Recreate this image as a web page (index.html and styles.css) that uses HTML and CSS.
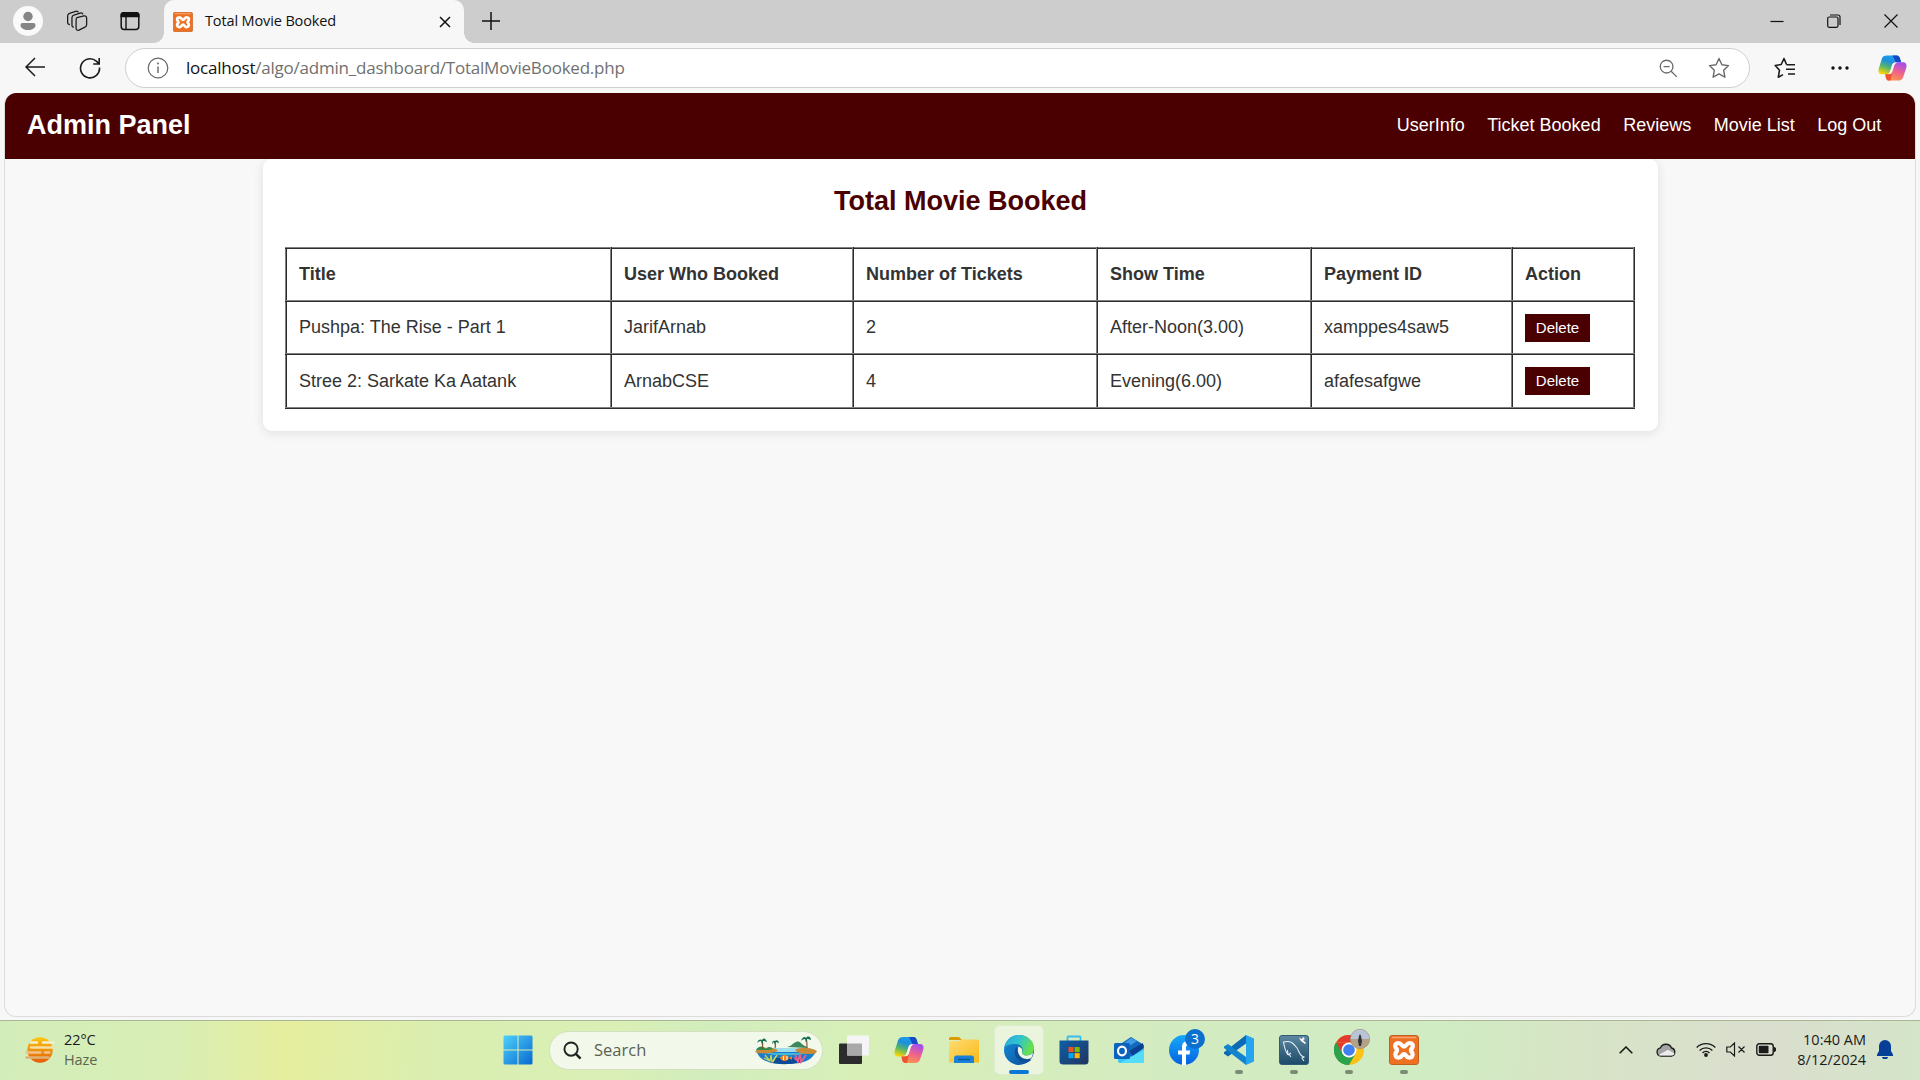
FILE: index.html
```html
<!DOCTYPE html>
<html lang="en">
<head>
<meta charset="utf-8">
<title>Total Movie Booked</title>
<link rel="stylesheet" href="styles.css">
</head>
<body>
<svg width="0" height="0" class="defs" aria-hidden="true">
  <defs>
    <linearGradient id="cpBlue" x1="0.7" y1="0" x2="0.3" y2="1"><stop offset="0" stop-color="#1ba0f2"/><stop offset=".35" stop-color="#1d8fdc"/><stop offset=".65" stop-color="#54b56b"/><stop offset="1" stop-color="#f6d60a"/></linearGradient>
    <linearGradient id="cpPink" x1="0.7" y1="0" x2="0.3" y2="1"><stop offset="0" stop-color="#a24df0"/><stop offset=".5" stop-color="#f0628b"/><stop offset="1" stop-color="#fd9a4c"/></linearGradient>
    <linearGradient id="win" x1="0" y1="0" x2="1" y2="1"><stop offset="0" stop-color="#4fd0fb"/><stop offset="1" stop-color="#0669cf"/></linearGradient>
    <linearGradient id="sun" x1="0" y1="0" x2="0" y2="1"><stop offset="0" stop-color="#fbc911"/><stop offset="1" stop-color="#e65a05"/></linearGradient>
    <linearGradient id="edgeTop" x1="0" y1="0" x2="1" y2=".4"><stop offset="0" stop-color="#2aa5dd"/><stop offset=".5" stop-color="#30c3d0"/><stop offset="1" stop-color="#66e04e"/></linearGradient>
    <linearGradient id="edgeLow" x1="0" y1="0" x2="1" y2="1"><stop offset="0" stop-color="#1590e0"/><stop offset="1" stop-color="#0c4a91"/></linearGradient>
    <linearGradient id="store" x1="0" y1="0" x2="1" y2="1"><stop offset="0" stop-color="#0f5fa8"/><stop offset="1" stop-color="#20345f"/></linearGradient>
    <linearGradient id="fb" x1="0" y1="0" x2="0" y2="1"><stop offset="0" stop-color="#17a9fb"/><stop offset="1" stop-color="#0562e0"/></linearGradient>
    <linearGradient id="folder" x1="0" y1="0" x2="1" y2="1"><stop offset="0" stop-color="#ffdc74"/><stop offset="1" stop-color="#f9b916"/></linearGradient>
    <linearGradient id="sql" x1="0" y1="0" x2="0" y2="1"><stop offset="0" stop-color="#5d87a1"/><stop offset="1" stop-color="#1c4a68"/></linearGradient>
    <symbol id="copilot" viewBox="0 0 30 30">
      <path d="M9 2h10c2 0 3 1.500 3.500 3.500L23.500 9h-5c-2.500 0-3.500 1.500-4 3.500l-2 6c-.6 1.900-1.500 3-3.500 3H4c-3 0-4.200-2.500-3.200-6L4 5.500C4.800 3 6.500 2 9 2z" fill="url(#cpBlue)"/>
      <path d="M15 2h4.500c2 0 3 1.500 3.500 3.500L24 9h-5.500z" fill="#1549c6"/>
      <path d="M21 28H11.500c-2 0-3-1.500-3.500-3.500L7 21.500h3.500c2.500 0 3.500-1.500 4-3.500l2-6c.6-1.900 1.500-3 3.500-3h6c3 0 4.200 2.500 3.200 6L26 24.500C25.200 27 23.500 28 21 28z" fill="url(#cpPink)"/>
      <path d="M8 21.500h3c2.400 0 3.400-1 4-3l-2 9.500h-1.500c-2 0-3-1.500-3.500-3.500z" fill="#ee5430"/>
      <path d="M17.500 9.500h3.500c-2.500 0-3.600 1-4.200 3l-1.700 5.500c-.6 2-1.600 3-3.800 3H9c2 0 3-1 3.500-2.700l1.900-6c.5-1.700 1.300-2.800 3.100-2.800z" fill="#f6f4ef"/>
    </symbol>
    <symbol id="xampp" viewBox="0 0 30 30">
      <rect x=".5" y=".5" width="29" height="29" rx="2.500" fill="#ee7023" stroke="#c4601f"/>
      <path d="M3 2.500h24" stroke="#f7a273" stroke-width="1.500"/>
      <path d="M9.500 8c-3 0-3.800 2.300-3 4.200.6 1.400 1.600 1.900 1.600 3s-1 1.600-1.600 3.200c-.8 2.300.6 4.300 3.200 4.300 3.200 0 3-3.600 5.300-3.600s2.100 3.600 5.300 3.600c2.600 0 4-2 3.200-4.300-.6-1.600-1.600-2.100-1.600-3.200s1-1.600 1.600-3c.8-1.900 0-4.200-3-4.200s-3.200 3.600-5.500 3.600-2.500-3.600-5.500-3.600z" fill="none" stroke="#fff" stroke-width="4.200" stroke-linejoin="round"/>
    </symbol>
  </defs>
</svg>

<div class="tabstrip">
  <div class="strip-tools">
    <svg class="avatar" viewBox="0 0 30 30"><circle cx="15" cy="15" r="15" fill="#fafafa"/><circle cx="15" cy="10.500" r="4.700" fill="#868686"/><path d="M7.500 19a2 2 0 0 1 2-2h11a2 2 0 0 1 2 2c0 3.500-3.500 5-7.500 5s-7.500-1.500-7.500-5z" fill="#868686"/></svg>
    <svg class="workspaces" viewBox="0 0 24 24" fill="none" stroke="#1b1b1b" stroke-width="1.400"><path d="M12 8.200l7.500-1.800c1.700-.4 3 .6 3 2.200v7.600c0 1.200-.6 2.100-1.800 2.500l-6.600 3.200c-1.700.7-3.100-.2-3.100-1.900v-9c0-1.500.2-2.500 1-2.800z"/><path d="M8.500 18.500c-1.400.2-2-.7-2-2V8.500c0-1.500.6-2.500 2-2.900l7-2.200c1.400-.4 2.600 0 3 1.400"/><path d="M4.200 15.800C3 16 1.800 15 1.800 13.500V6.500c0-1.500.6-2.500 2-2.900L10.500 1.500c1.400-.4 2.600 0 3 1.200"/></svg>
    <svg class="tabactions" viewBox="0 0 20 20"><rect x="1.200" y="1.700" width="17.600" height="16.800" rx="3" fill="none" stroke="#111" stroke-width="1.500"/><path d="M.5 6.300V4a3 3 0 0 1 3-3h13a3 3 0 0 1 3 3v2.300z" fill="#111"/><path d="M6 6v12" stroke="#111" stroke-width="1.400"/></svg>
  </div>
  <div class="tab">
    <svg class="favicon"><use href="#xampp"/></svg>
    <span class="tab-title">Total Movie Booked</span>
    <svg class="tab-close" viewBox="0 0 12 12"><path d="M1 1l10 10M11 1L1 11" stroke="#111" stroke-width="1.500"/></svg>
  </div>
  <svg class="newtab" viewBox="0 0 18 18"><path d="M9 0v18M0 9h18" stroke="#111" stroke-width="1.500"/></svg>
  <div class="winctl">
    <svg viewBox="0 0 14 14"><path d="M.5 7.500h13" stroke="#111" stroke-width="1.200"/></svg>
    <svg viewBox="0 0 14 14" fill="none" stroke="#111" stroke-width="1.200"><rect x=".7" y="3" width="10.300" height="10.300" rx="1.500"/><path d="M3 1h8a2 2 0 0 1 2 2v8"/></svg>
    <svg viewBox="0 0 14 14"><path d="M.5.500l13 13M13.500.500l-13 13" stroke="#111" stroke-width="1.200"/></svg>
  </div>
</div>

<div class="toolbar">
  <svg class="back" viewBox="0 0 20 20" fill="none" stroke="#1b1b1b" stroke-width="1.500"><path d="M20 10H1M10 1L1 10l9 9"/></svg>
  <svg class="reload" viewBox="0 0 22 22" fill="none" stroke="#1b1b1b" stroke-width="1.600"><path d="M20.500 10.500a9.500 9.500 0 1 1-3.200-6.300L20 6.700M20.200 1v6h-6"/></svg>
  <div class="address">
    <svg class="info" viewBox="0 0 22 22"><circle cx="11" cy="11" r="9.800" fill="none" stroke="#666" stroke-width="1.200"/><path d="M11 9.500v6.500" stroke="#666" stroke-width="1.400"/><circle cx="11" cy="6.500" r="1" fill="#666"/></svg>
    <span class="url"><b>localhost</b>/algo/admin_dashboard/TotalMovieBooked.php</span>
    <svg class="zoomout" viewBox="0 0 20 20" fill="none" stroke="#6a6a6a" stroke-width="1.400"><circle cx="8" cy="8" r="6.700"/><path d="M4.800 8h6.400M12.800 12.800l6 6"/></svg>
    <svg class="star" viewBox="0 0 22 22" fill="none" stroke="#6a6a6a" stroke-width="1.400" stroke-linejoin="round"><path d="M11 1.500l2.900 6.200 6.600.9-4.800 4.700 1.200 6.900L11 16.900l-5.900 3.300 1.200-6.900L1.500 8.600l6.600-.9z"/></svg>
  </div>
  <svg class="favs" viewBox="0 0 22 22" fill="none" stroke="#1b1b1b" stroke-width="1.600" stroke-linejoin="round"><path d="M12.500 7.500L10 1.500 7.200 7.500l-6 1 4.300 4.700-1.200 7 4.700-2.600M12.500 7.700H21M12 12.300h9M14 17h7"/></svg>
  <svg class="dots" viewBox="0 0 18 4"><circle cx="2" cy="2" r="1.700"/><circle cx="9" cy="2" r="1.700"/><circle cx="16" cy="2" r="1.700"/></svg>
  <svg class="sidebar-copilot"><use href="#copilot"/></svg>
</div>

<div class="viewport">
  <header class="navbar">
    <div class="brand">Admin Panel</div>
    <nav><a>UserInfo</a><a>Ticket Booked</a><a>Reviews</a><a>Movie List</a><a>Log Out</a></nav>
  </header>
  <main class="card">
    <h2>Total Movie Booked</h2>
    <table>
      <colgroup><col class="c1"><col class="c2"><col class="c3"><col class="c4"><col class="c5"><col class="c6"></colgroup>
      <tr><th>Title</th><th>User Who Booked</th><th>Number of Tickets</th><th>Show Time</th><th>Payment ID</th><th>Action</th></tr>
      <tr><td>Pushpa: The Rise - Part 1</td><td>JarifArnab</td><td>2</td><td>After-Noon(3.00)</td><td>xamppes4saw5</td><td><button>Delete</button></td></tr>
      <tr><td>Stree 2: Sarkate Ka Aatank</td><td>ArnabCSE</td><td>4</td><td>Evening(6.00)</td><td>afafesafgwe</td><td><button>Delete</button></td></tr>
    </table>
  </main>
</div>

<footer class="taskbar">
  <div class="weather">
    <svg viewBox="0 0 30 28"><circle cx="15" cy="14" r="12.700" fill="url(#sun)"/><g stroke-linecap="round" stroke-width="2.400"><path d="M6 6.500h6M18 6.500h10.500" stroke="#f3efcf"/><path d="M6 11.500h22" stroke="#f6dfa0"/><path d="M1.500 16.500h14M20 16.500h4.500" stroke="#eec38d"/><path d="M1.500 21.500h22" stroke="#e0b276"/></g></svg>
    <div><div>22°C</div><div class="dim">Haze</div></div>
  </div>
  <div class="apps">
    <div class="app"><svg viewBox="0 0 30 30"><path d="M.5 2a1.500 1.500 0 0 1 1.500-1.500h12.500v14H.5zM15.500.500H28A1.500 1.500 0 0 1 29.500 2v12.500h-14zM.500 15.500h14v14H2A1.500 1.500 0 0 1 .5 28zM15.500 15.500h14V28a1.500 1.500 0 0 1-1.500 1.500H15.500z" fill="url(#win)"/></svg></div>
    <div class="search">
      <svg class="glass" viewBox="0 0 20 20" fill="none" stroke="#222" stroke-width="2"><circle cx="8.500" cy="8.500" r="7"/><path d="M13.500 13.500l5 5" stroke-width="2.600"/></svg>
      <span>Search</span>
      <svg class="island" viewBox="0 0 62 30">
        <path d="M1 16c4-3 10-3 14-3h32c6 0 11 1 14 4l-3 4c-4 6-15 8-27 8S8 27 4 21z" fill="#1b7ccb"/>
        <path d="M14 13h34l6 4H8z" fill="#9fdcec"/>
        <path d="M10 18h42c-6 3-36 3-42 0z" fill="#42b8dc"/>
        <path d="M14 27c8 3 26 3 34-1l-8-3H20z" fill="#0b4b97"/>
        <path d="M0 17c2-4 8-5 14-4 5 0 8 1 9 3-5 2-14 3-20 2zM40 15c5-3 15-3 22 1-1 3-4 3-8 3-6 0-12-1-14-4z" fill="#c98b35"/>
        <path d="M1 15c2-4 7-5 10-1 2-3 6-2 7 0l-5 1z" fill="#2f8a50"/>
        <path d="M32 12c5-1 6-4 9-5s4 0 6 2 4 2 6 4z" fill="#3d875c"/>
        <path d="M7 14c1-4 1-6 0-9M20 13c1-3 0-4 0-6M52 13c0-5 0-8-1-10" stroke="#855332" stroke-width="1.200" fill="none"/>
        <path d="M2 8c1-4 4-4 5-3 2-3 4-1 5 2-2-1-3-1-4-1l-1 4-1-4c-2 0-3 1-4 2zM17 9c0-3 2-4 3-3 2-2 4 0 4 2l-3-1-1 3-1-3zM46 6c1-4 4-5 5-3 2-3 5-1 5 2-2-1-3-1-4-1l-1 4-1-4c-2 0-3 1-4 2z" fill="#167052"/>
        <path d="M10 20l5 6 1-6 1 7 4-6M9 23l6 3M22 20l-4 7" stroke="#c9d75b" stroke-width="1.200" fill="none"/>
        <path d="M40 19l3 8 2-8 1 8 5-7M39 23l5 4" stroke="#e9608f" stroke-width="1.600" fill="none"/>
        <path d="M25 23c2-4 7-4 9 0l3-2v4l-3-2c-2 4-7 4-9 0z" fill="#f4821d"/><path d="M28.500 21v4M32 21v4" stroke="#fff"/>
      </svg>
    </div>
    <div class="app"><svg viewBox="0 0 30 30"><rect x="0" y="8.500" width="23" height="20.500" rx="1" fill="#2c2c2c"/><rect x="8" y=".5" width="22" height="20" rx="1" fill="#f5f5f5"/><rect x="8" y="8.500" width="15" height="12" fill="#a9a9a9"/></svg></div>
    <div class="app"><svg><use href="#copilot"/></svg></div>
    <div class="app"><svg viewBox="0 0 30 30"><path d="M0 3.500A1.500 1.500 0 0 1 1.500 2H10l3 3h-13z" fill="#dd9b05"/><path d="M0 6h10l3-1.500h15.500A1.500 1.500 0 0 1 30 6v21.500H0z" fill="url(#folder)"/><path d="M5 28v-5a2.500 2.500 0 0 1 2.500-2.500h15A2.500 2.500 0 0 1 25 23v5z" fill="#1782d6"/><path d="M9 24.500h12" stroke="#0a56a3" stroke-width="1.500"/></svg></div>
    <div class="app active"><svg viewBox="0 0 30 30"><circle cx="15" cy="15" r="15" fill="url(#edgeLow)"/><path d="M.3 12.500C2 4.500 8 0 15 0c8.500 0 15 6 15 13 0 5-3.500 7.500-7.500 7.500-3.500 0-5.500-1.500-4.500-3 2-3 0-8.500-6.500-8.500C6 9 2 10.500.3 12.500z" fill="url(#edgeTop)"/><path d="M12 12c-3 6-.5 14 8 15.500 3 .3 6-1 7.500-3-4 1.500-9 .5-11.500-3-1-1.500-1.500-3.300-.5-5.500z" fill="#0d4f98"/><path d="M14.500 11.500c3 .8 4.500 3.300 3.500 6-.5 1.500 1.500 3 4.500 3 3 0 5-1 6.500-3-.1 2-.8 4-2 5.800-4 1.500-8.500.5-11-2.300-2.500-3-2.800-6.500-1.500-9.500z" fill="#eff7e2"/></svg><i></i></div>
    <div class="app"><svg viewBox="0 0 30 30"><path d="M8.500 6V2.500a1 1 0 0 1 1-1h11a1 1 0 0 1 1 1V6" fill="none" stroke="#36bdf0" stroke-width="1.800"/><path d="M.5 5.500h29V26a3.500 3.500 0 0 1-3.500 3.500H4A3.500 3.500 0 0 1 .5 26z" fill="url(#store)"/><path d="M9.500 12H14.600v5.100H9.500z" fill="#f25022"/><path d="M15.600 12h5.100v5.100h-5.100z" fill="#7fba00"/><path d="M9.500 18.100h5.100v5.100H9.500z" fill="#00a4ef"/><path d="M15.600 18.100h5.100v5.100h-5.100z" fill="#ffb900"/></svg></div>
    <div class="app"><svg viewBox="0 0 30 30"><path d="M5 10L17 2l13 8v4L17 22 5 16z" fill="#1368bc"/><path d="M9 9l8-6 6 3-12 8z" fill="#3f9be4"/><path d="M15 16l14-8v6l-9 8z" fill="#0a3f91"/><path d="M4 16l13 6 13-9v12.500a2.500 2.500 0 0 1-2.500 2.500h-21A2.500 2.500 0 0 1 4 25.500z" fill="#38c5f5"/><path d="M6 28l24-13v11a2 2 0 0 1-2 2z" fill="#54dcfa"/><rect y="8" width="16" height="16" rx="1.500" fill="#0c63be"/><ellipse cx="8" cy="16" rx="4" ry="4.400" fill="none" stroke="#fff" stroke-width="2.200"/></svg></div>
    <div class="app"><svg viewBox="0 0 30 30"><circle cx="15" cy="15" r="15" fill="url(#fb)"/><path d="M13 30V19.500H9v-4h4V12c0-4 2.500-6 6-6h2v4h-1.500c-1.700 0-2.500.8-2.500 2.500v3h4.200l-.7 4H17V30z" fill="#fff"/></svg><b class="badge">3</b></div>
    <div class="app"><svg viewBox="0 0 30 30"><path d="M22 0v8.500L4 21.500 0 18.800v-1.500z" fill="#0a6ab6"/><path d="M0 11.500L4 9l18 13v8L0 13z" fill="#1283cc"/><path d="M22 0l8 3.500v23L22 30z" fill="#25a4f0"/></svg><i></i></div>
    <div class="app"><svg viewBox="0 0 30 30"><rect x=".5" y=".5" width="29" height="29" rx="2.500" fill="url(#sql)" stroke="#315a75"/><path d="M9 20c-3-4-4-10-4.500-13C12 5 15 9 18 13c2 3 2 6 5 8l2 1-2 1 2 3M9 20l-.5-5M9 20l3-2M10 19l2 3" fill="none" stroke="#e4edf2" stroke-width="1.100"/><path d="M20 3l2 3 4 3 1-1-3-3 2-1-2-2-1 2z" fill="#fff"/></svg><i></i></div>
    <div class="app"><svg viewBox="0 0 30 30"><circle cx="15" cy="15" r="15" fill="#fbc116"/><path d="M2 7.500A15 15 0 0 1 28 7.500H15z" fill="#e33b2e"/><path d="M2 7.500A15 15 0 0 0 15 30l6.500-11.200L15 15z" fill="#2ba24c"/><path d="M2 7.500L8.500 18.800 15 15V7.500z" fill="#e33b2e"/><path d="M2 7.500l6.500 11.300 6 3.700L15 30A15 15 0 0 1 2 7.500z" fill="#2ba24c"/><circle cx="15" cy="15" r="7.500" fill="#fff"/><circle cx="15" cy="15" r="5.800" fill="#3f7ff0"/></svg><svg class="photo" viewBox="0 0 20 20"><circle cx="10" cy="10" r="10" fill="#8f8a83"/><path d="M.5 10a9.500 9.500 0 0 1 19 0z" fill="#b9c4d6"/><path d="M.5 10h19a9.500 9.500 0 0 1-19 0z" fill="#b5a286"/><path d="M9 7l1-2 1 2 1 5-1 5H9l-1-5z" fill="#30333b"/></svg><i></i></div>
    <div class="app"><svg><use href="#xampp"/></svg><i></i></div>
  </div>
  <div class="tray">
    <svg class="chev" viewBox="0 0 14 8"><path d="M.7 7.300L7 1l6.300 6.300" fill="none" stroke="#1b1b1b" stroke-width="1.600"/></svg>
    <svg class="cloud" viewBox="0 0 20 14"><path d="M5 13.200a4.200 4.200 0 0 1-.6-8.300A6 6 0 0 1 15.500 5a4.200 4.200 0 0 1 0 8.200z" fill="#a4a4a4" stroke="#1b1b1b" stroke-width="1.300"/><path d="M2.500 12L12 6.800l6.500 3.700c-.5 1.400-1.600 2-3 2H5c-1 0-1.800 0-2.500-.5z" fill="#ececec"/></svg>
    <svg class="wifi" viewBox="0 0 20 15" fill="none" stroke="#1b1b1b" stroke-width="1.400"><path d="M.7 5.500a13 13 0 0 1 18.600 0M3.600 8.500a9 9 0 0 1 12.800 0M6.500 11a5 5 0 0 1 7 0"/><circle cx="10" cy="13" r="1.200" fill="#1b1b1b"/></svg>
    <svg class="sound" viewBox="0 0 20 15" fill="none" stroke="#1b1b1b" stroke-width="1.200"><path d="M.8 5v5h3.500L8.500 14V1L4.300 5zM12.500 4.500l6 6M18.500 4.500l-6 6"/></svg>
    <svg class="battery" viewBox="0 0 20 13"><rect x=".8" y=".8" width="16.400" height="11.400" rx="2.500" fill="none" stroke="#1b1b1b" stroke-width="1.400"/><rect x="2.800" y="2.800" width="9.700" height="7.400" rx=".8" fill="#1b1b1b"/><path d="M18 4.500a2 2 0 0 1 2 2 2 2 0 0 1-2 2z" fill="#1b1b1b" stroke="#1b1b1b"/></svg>
    <div class="clock"><div>10:40 AM</div><div>8/12/2024</div></div>
    <svg class="bell" viewBox="0 0 16 19"><path d="M8 0a6 6 0 0 1 6 6v5l2 3.500V16H0v-1.500L2 11V6a6 6 0 0 1 6-6zM5 17h6a3 2.200 0 0 1-6 0z" fill="#063f98"/></svg>
  </div>
</footer>
</body>
</html>
```

FILE: styles.css
```css
* { box-sizing: border-box; }
body {
  margin: 0;
  width: 1920px;
  height: 1080px;
  overflow: hidden;
  display: flex;
  flex-direction: column;
  background: #f7f7f7;
  font-family: "Liberation Sans", Arial, sans-serif;
}
svg { display: block; flex: none; }
.defs { position: absolute; }

/* browser chrome */
.tabstrip {
  height: 43px;
  flex: none;
  display: flex;
  align-items: center;
  background: #cdcdcd;
}
.strip-tools { width: 164px; padding: 0 0 1px 13px; display: flex; align-items: center; }
.avatar { width: 30px; height: 30px; }
.workspaces { width: 22px; height: 22px; margin-left: 23px; }
.tabactions { width: 20px; height: 20px; margin-left: 32px; }
.tab {
  width: 300px;
  height: 43px;
  padding: 0 13px 0 9px;
  display: flex;
  align-items: center;
  background: #f7f7f7;
  border-radius: 10px 10px 0 0;
  position: relative;
}
.tab::before, .tab::after {
  content: "";
  position: absolute;
  bottom: 0;
  width: 10px;
  height: 10px;
}
.tab::before { left: -10px; background: radial-gradient(circle at 0 0, #cdcdcd 9.500px, #f7f7f7 10px); }
.tab::after { right: -10px; background: radial-gradient(circle at 100% 0, #cdcdcd 9.500px, #f7f7f7 10px); }
.favicon { width: 20px; height: 20px; }
.tab-title {
  margin-left: 12px;
  padding-bottom: 2px;
  flex: 1;
  font: 14.500px/20px "Open Sans", "Noto Sans", sans-serif;
  letter-spacing: -0.13px;
  color: #111;
}
.tab-close { width: 12px; height: 12px; }
.newtab { width: 18px; height: 18px; margin: 0 0 1px 18px; }
.winctl { margin-left: auto; padding: 0 22px 1px 0; display: flex; gap: 43px; }
.winctl svg { width: 14px; height: 14px; }

.toolbar {
  height: 50px;
  flex: none;
  display: flex;
  align-items: center;
  padding: 0 13px 0 25px;
}
.back { width: 20px; height: 20px; margin-bottom: 2px; }
.reload { width: 22px; height: 22px; margin-left: 34px; }
.address {
  width: 1625px;
  height: 40px;
  margin-left: 24px;
  padding: 0 19px 0 21px;
  display: flex;
  align-items: center;
  background: #fff;
  border: 1px solid #cfcfcf;
  border-radius: 20px;
}
.info { width: 22px; height: 22px; }
.url {
  flex: 1;
  margin-left: 17px;
  padding-bottom: 1px;
  font: 17px/24px "Open Sans", "Noto Sans", sans-serif;
  letter-spacing: -0.22px;
  color: #707070;
}
.url b { font-weight: 400; color: #111; }
.zoomout { width: 19px; height: 19px; margin-right: 30px; }
.star { width: 22px; height: 22px; }
.favs { width: 22px; height: 22px; margin-left: 24px; }
.dots { width: 18px; height: 4px; margin-left: 35px; fill: #111; }
.sidebar-copilot { width: 29px; height: 30px; margin-left: auto; }

/* page */
.viewport {
  width: 1912px;
  height: 924px;
  flex: none;
  margin-left: 4px;
  border: 1px solid #dcdcdc;
  border-top: 0;
  border-radius: 12px;
  background: #f8f8f8;
  overflow: hidden;
}
.navbar {
  height: 66px;
  padding: 0 22.500px 1px 22px;
  display: flex;
  align-items: center;
  justify-content: space-between;
  background: #4a0000;
  color: #fff;
}
.brand { font-size: 27px; font-weight: 700; }
.navbar nav { display: flex; font-size: 18px; }
.navbar a { margin: 0 11.250px; }
.card {
  width: 1395px;
  height: 272px;
  margin-left: 258px;
  padding: 22px;
  background: #fff;
  border-radius: 9px;
  box-shadow: 0 2px 11px rgba(0, 0, 0, .1);
  color: #333;
}
.card h2 {
  margin: 5px 0 30px;
  font-size: 27px;
  line-height: 31px;
  text-align: center;
  color: #4a0000;
}
table { width: 1350px; table-layout: fixed; border-collapse: collapse; font-size: 18px; }
th, td { height: 53px; padding: 0 12px; border: 2px ridge gray; text-align: left; }
tr:last-child td { height: 54px; }
.c1 { width: 325px; }
.c2 { width: 242px; }
.c3 { width: 244px; }
.c4 { width: 214px; }
.c5 { width: 201px; }
.c6 { width: 122px; }
button {
  display: block;
  width: 65px;
  height: 28px;
  padding: 0;
  border: 0;
  background: #4a0000;
  color: #fff;
  font: 15px/28px "Liberation Sans", Arial, sans-serif;
}

/* taskbar */
.taskbar {
  height: 60px;
  margin-top: auto;
  padding-bottom: 1px;
  flex: none;
  display: grid;
  grid-template-columns: 491px 1fr 320px;
  align-items: center;
  border-top: 1px solid #aab795;
  background: linear-gradient(95deg, #d3edba 0, #d8eeb5 9%, #e6ee9e 15%, #daeeb1 23%, #d9efb5 32%, #d2edbd 37%, #d8efb8 45%, #d3ebc1 62%, #d0ecc3 75%, #d7e4c6 82%, #dadece 92%, #d4e5c8 100%);
  font: 15px/20px "Open Sans", "Noto Sans", sans-serif;
  color: #1b1b1b;
}
.weather { padding: 0 0 1px 25px; display: flex; align-items: center; gap: 9px; font-size: 14.500px; letter-spacing: -0.1px; }
.weather svg { width: 30px; height: 28px; }
.dim { color: #5b6650; }
.apps { display: flex; align-items: center; gap: 7px; padding-left: 3px; }
.app {
  width: 48px;
  height: 48px;
  position: relative;
  display: flex;
  align-items: center;
  justify-content: center;
  border-radius: 5px;
}
.app svg { width: 30px; height: 30px; }
.app.active { background: #ebf5dd; box-shadow: 0 0 0 1px #dfebce; }
.app i {
  position: absolute;
  bottom: 0;
  left: 20px;
  width: 8px;
  height: 4px;
  border-radius: 2px;
  background: #7c8b73;
}
.app.active i { left: 14px; width: 20px; background: #0a78d6; }
.badge {
  position: absolute;
  left: 25px;
  top: 3px;
  width: 20px;
  height: 20px;
  border-radius: 50%;
  background: #0b6fce;
  color: #fff;
  font: 14px/20px "Open Sans", sans-serif;
  text-align: center;
}
.app .photo { position: absolute; left: 25px; top: 3px; width: 20px; height: 20px; }
.search {
  width: 274px;
  height: 39px;
  padding: 0 5px 0 13px;
  display: flex;
  align-items: center;
  border: 1px solid #d3e0c1;
  border-radius: 20px;
  background: #f2f9ea;
  font-size: 16.500px;
  color: #5a5f54;
}
.search span { flex: 1; margin-left: 12px; }
.glass { width: 19px; height: 19px; }
.island { width: 62px; height: 30px; }
.tray { display: flex; align-items: center; padding: 0 0 1px 19px; }
.chev { width: 14px; height: 8px; }
.cloud { width: 20px; height: 14px; margin-left: 23px; }
.wifi { width: 20px; height: 15px; margin-left: 20px; }
.sound { width: 20px; height: 15px; margin-left: 10px; }
.battery { width: 20px; height: 13px; margin-left: 10px; }
.clock { width: 90px; text-align: right; font-size: 14.500px; letter-spacing: 0; }
.bell { width: 16px; height: 19px; margin-left: 11px; }
```
